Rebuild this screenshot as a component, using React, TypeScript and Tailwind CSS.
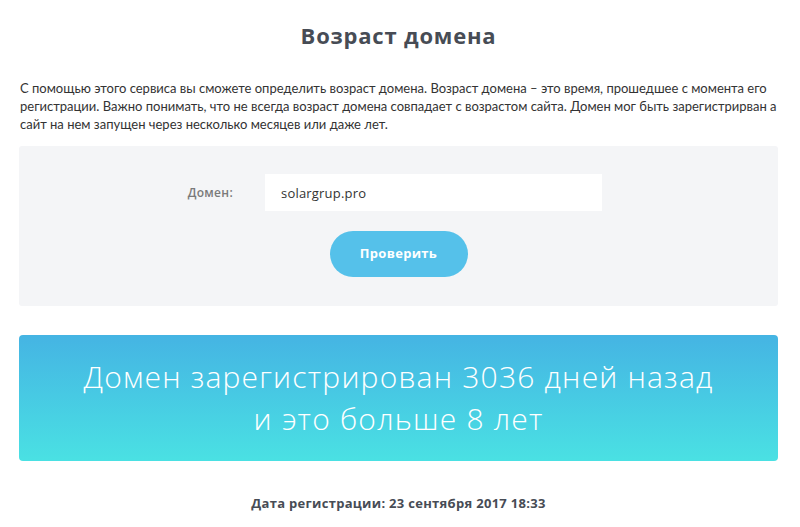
import React, { useState } from 'react'

const heading = "font-['Open_Sans',sans-serif]"
const body = "font-['Lato',sans-serif]"

export default function App() {
  const [domain, setDomain] = useState('solargrup.pro')

  return (
    <div className="w-[800px] h-[527px] bg-white overflow-hidden pl-[19px] pr-[22px]">
      <h1 className={`${heading} text-center text-[22px] font-bold tracking-[0.8px] text-[#474c55] pt-[19px] leading-[32px]`}>
        Возраст домена
      </h1>

      <p className={`${body} mt-[28px] pl-px text-[13px] leading-[18px] text-[#333]`}>
        С помощью этого сервиса вы сможете определить возраст домена. Возраст домена – это время, прошедшее с момента его
        регистрации. Важно понимать, что не всегда возраст домена совпадает с возрастом сайта. Домен мог быть зарегистрирван а
        сайт на нем запущен через несколько месяцев или даже лет.
      </p>

      <div className="mt-[13px] h-[160px] bg-[#f4f5f7] rounded-[3px] pt-[28px]">
        <div className="flex items-center">
          <label className={`${heading} w-[214px] text-right text-[12px] font-semibold tracking-[0.3px] text-[#7a7a7a]`}>
            Домен:
          </label>
          <input
            value={domain}
            onChange={e => setDomain(e.target.value)}
            className={`${heading} ml-[32px] w-[337px] h-[37px] bg-white px-[16px] text-[13px] tracking-[0.2px] text-[#333] outline-none`}
          />
        </div>
        <div className="flex justify-center mt-[20px]">
          <button className={`${heading} w-[138px] h-[46px] rounded-full bg-[#55c1ea] text-white text-[13px] font-bold tracking-[0.3px]`}>
            Проверить
          </button>
        </div>
      </div>

      <div className="mt-[29px] h-[126px] rounded-[4px] bg-gradient-to-b from-[#45b4e3] to-[#4ae1e3] flex flex-col items-center justify-center">
        <p className={`${heading} text-white text-[30px] font-light tracking-[1.2px] leading-[42px] text-center`}>
          Домен зарегистрирован 3036 дней назад
          <br />
          и это больше 8 лет
        </p>
      </div>

      <p className={`${heading} mt-[33px] text-center text-[13px] font-bold tracking-[0.3px] text-[#474c55]`}>
        Дата регистрации: 23 сентября 2017 18:33
      </p>
    </div>
  )
}
